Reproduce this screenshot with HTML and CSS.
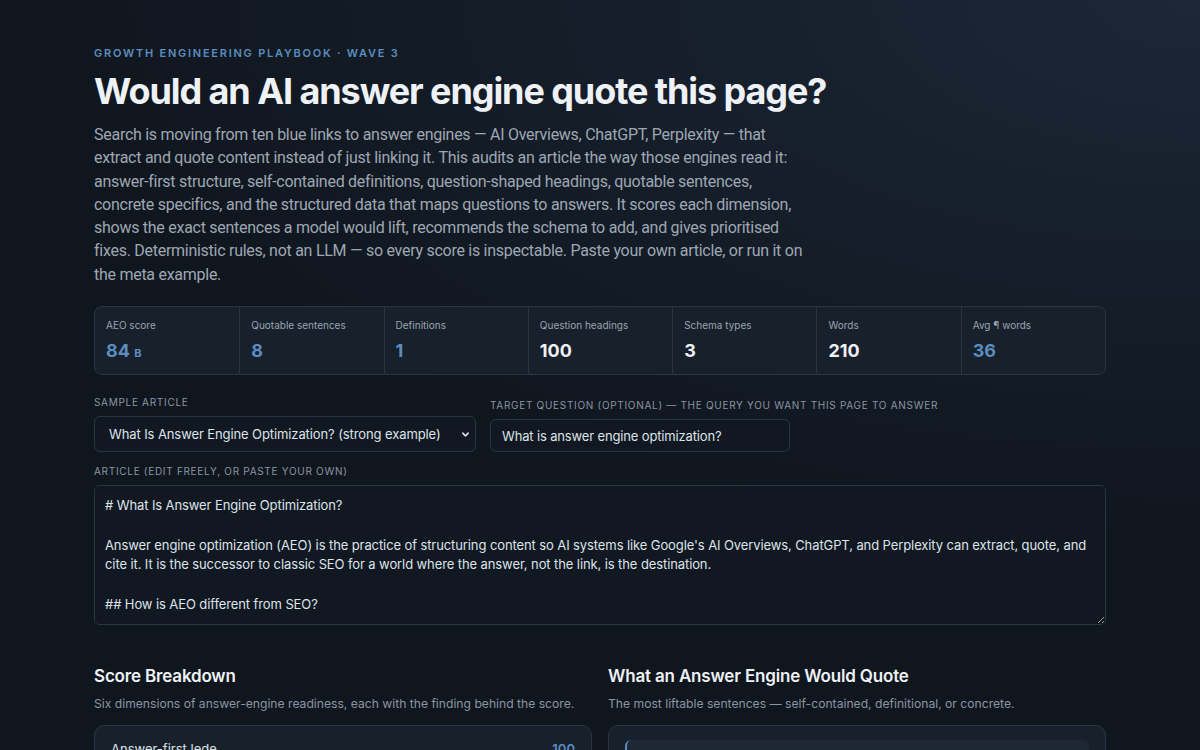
FILE: index.html
```html
<!DOCTYPE html>
<html lang="en">
<head>
<meta charset="utf-8">
<title>AEO audit</title>
<link rel="stylesheet" href="styles.css">
</head>
<body>
<main class="page">
  <header class="hero">
    <p class="eyebrow">Growth Engineering Playbook · Wave 3</p>
    <h1 class="title">Would an AI answer engine quote this page?</h1>
    <p class="intro">Search is moving from ten blue links to answer engines — AI Overviews, ChatGPT, Perplexity — that extract and quote content instead of just linking it. This audits an article the way those engines read it: answer-first structure, self-contained definitions, question-shaped headings, quotable sentences, concrete specifics, and the structured data that maps questions to answers. It scores each dimension, shows the exact sentences a model would lift, recommends the schema to add, and gives prioritised fixes. Deterministic rules, not an LLM — so every score is inspectable. Paste your own article, or run it on the meta example.</p>
  </header>

  <section class="stats">
    <div class="stat"><div class="stat-label">AEO score</div><div class="stat-value accent">84 <span class="grade">B</span></div></div>
    <div class="stat"><div class="stat-label">Quotable sentences</div><div class="stat-value accent">8</div></div>
    <div class="stat"><div class="stat-label">Definitions</div><div class="stat-value accent">1</div></div>
    <div class="stat"><div class="stat-label">Question headings</div><div class="stat-value">100</div></div>
    <div class="stat"><div class="stat-label">Schema types</div><div class="stat-value">3</div></div>
    <div class="stat"><div class="stat-label">Words</div><div class="stat-value">210</div></div>
    <div class="stat"><div class="stat-label">Avg ¶ words</div><div class="stat-value accent">36</div></div>
  </section>

  <section class="controls">
    <div class="field">
      <span class="field-label">Sample article</span>
      <span class="select">
        <span class="select-text">What Is Answer Engine Optimization? (strong example)</span>
        <svg class="chev" width="9" height="9" viewBox="0 0 10 10"><path d="M2 3.5 L5 6.5 L8 3.5" fill="none" stroke="#d7dde5" stroke-width="1.8" stroke-linecap="round" stroke-linejoin="round"/></svg>
      </span>
    </div>
    <div class="field">
      <span class="field-label">Target question (optional) — the query you want this page to answer</span>
      <input class="input" type="text" value="What is answer engine optimization?">
    </div>
  </section>

  <div class="field field-article">
    <span class="field-label">Article (edit freely, or paste your own)</span>
    <textarea class="article" spellcheck="false"># What Is Answer Engine Optimization?

Answer engine optimization (AEO) is the practice of structuring content so AI systems like Google's AI Overviews, ChatGPT, and Perplexity can extract, quote, and cite it. It is the successor to classic SEO for a world where the answer, not the link, is the destination.

## How is AEO different from SEO?

AEO focuses on being quoted rather than ranked.</textarea>
  </div>

  <section class="panels">
    <div class="panel">
      <h2 class="panel-title">Score Breakdown</h2>
      <p class="panel-sub">Six dimensions of answer-engine readiness, each with the finding behind the score.</p>
      <div class="card">
        <div class="dim-row"><span class="dim-name">Answer-first lede</span><span class="dim-score">100</span></div>
      </div>
    </div>
    <div class="panel">
      <h2 class="panel-title">What an Answer Engine Would Quote</h2>
      <p class="panel-sub">The most liftable sentences — self-contained, definitional, or concrete.</p>
      <div class="card">
        <div class="quote"><p class="quote-text">Answer engine optimization (AEO) is the practice of structuring content so AI systems can extract it.</p></div>
      </div>
    </div>
  </section>
</main>
</body>
</html>
```

FILE: styles.css
```css
* { box-sizing: border-box; }

html, body {
  margin: 0;
  height: 100%;
}

body {
  font-family: Inter, "Noto Sans", sans-serif;
  color: #e6eaf0;
  background-color: #10161e;
  background-image: radial-gradient(ellipse 120% 90% at 100% 0%, #1c2737 0%, #151e2a 40%, #10161e 80%);
  background-attachment: fixed;
  overflow: hidden;
}

.page {
  max-width: 1012px;
  margin: 0 auto;
  padding-top: 46px;
}

.eyebrow {
  margin: 0;
  font-size: 11px;
  font-weight: 600;
  letter-spacing: 0.16em;
  text-transform: uppercase;
  color: #5b8ec0;
  line-height: 14px;
}

.title {
  margin: 9px 0 0;
  font-size: 36px;
  font-weight: 700;
  letter-spacing: -0.03em;
  line-height: 44px;
  color: #eef1f5;
}

.intro {
  margin: 10px 0 0;
  max-width: 720px;
  font-family: Roboto, Inter, sans-serif;
  font-size: 16px;
  letter-spacing: -0.27px;
  line-height: 23.3px;
  color: #9ea7b3;
}

.stats {
  margin-top: 20px;
  display: grid;
  grid-template-columns: repeat(7, 1fr);
  background: #18202b;
  border: 1px solid #2a3443;
  border-radius: 8px;
  overflow: hidden;
}

.stat {
  padding: 12px 11px 14px;
  border-left: 1px solid #2a3443;
  height: 67px;
}
.stat:first-child { border-left: none; }

.stat-label {
  font-size: 10px;
  line-height: 13px;
  color: #9aa4b1;
}

.stat-value {
  margin-top: 8px;
  font-size: 18px;
  font-weight: 700;
  line-height: 22px;
  color: #eef1f5;
}
.stat-value.accent { color: #5b8ec0; }

.grade {
  font-size: 11px;
  font-weight: 700;
  letter-spacing: 0.04em;
}

.controls {
  margin-top: 21px;
  display: flex;
  align-items: flex-end;
  gap: 14px;
}

.field {
  display: flex;
  flex-direction: column;
}

.field-label {
  font-size: 10px;
  line-height: 13px;
  letter-spacing: 0.07em;
  text-transform: uppercase;
  white-space: nowrap;
  color: #8b95a2;
  margin-bottom: 7px;
}

.select {
  display: flex;
  align-items: center;
  justify-content: space-between;
  width: 382px;
  height: 36px;
  padding: 0 5px 0 14px;
  background: #111821;
  border: 1px solid #2b3542;
  border-radius: 6px;
  font-size: 13px;
  letter-spacing: -0.1px;
  color: #dde3ea;
}

.input {
  width: 300px;
  height: 33px;
  padding: 0 11px;
  background: #111821;
  border: 1px solid #2b3542;
  border-radius: 6px;
  font-family: inherit;
  font-size: 13px;
  letter-spacing: -0.15px;
  color: #dde3ea;
  outline: none;
}

.field-article { margin-top: 13px; }

.article {
  height: 140px;
  padding: 10px 10px 7px;
  background: #111821;
  border: 1px solid #2b3542;
  border-radius: 6px;
  font-family: inherit;
  font-size: 13px;
  letter-spacing: -0.1px;
  line-height: 19.75px;
  color: #dde3ea;
  resize: vertical;
  outline: none;
}

.panels {
  margin-top: 40px;
  display: grid;
  grid-template-columns: 1fr 1fr;
  gap: 16px;
}

.panel-title {
  margin: 0;
  font-size: 17px;
  font-weight: 600;
  letter-spacing: -0.01em;
  line-height: 22px;
  color: #eef1f5;
}

.panel-sub {
  margin: 9px 0 0;
  font-size: 12.15px;
  line-height: 16px;
  color: #8b95a2;
}

.card {
  margin-top: 13px;
  background: #18202b;
  border: 1px solid #2a3443;
  border-radius: 10px;
  padding: 14px 16px;
  height: 120px;
}

.dim-row {
  display: flex;
  justify-content: space-between;
  font-size: 13px;
  line-height: 18px;
}
.dim-name { color: #dde3ea; }
.dim-score { color: #5b8ec0; font-weight: 600; }

.quote {
  background: #1e2835;
  border-left: 2px solid #5b8ec0;
  border-radius: 6px;
  padding: 14px 14px;
}

.quote-text {
  margin: 0;
  font-size: 13px;
  line-height: 19px;
  color: #dde3ea;
}
```
